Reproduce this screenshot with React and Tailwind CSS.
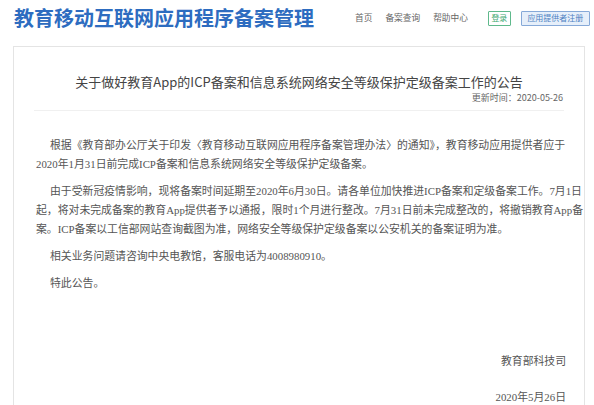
export default function App() {
  const cjk = { fontFamily: '"Noto Sans CJK SC", "Noto Sans", sans-serif' };
  const body = { fontFamily: '"Liberation Serif", "Noto Sans CJK SC", serif' };
  return (
    <div className="w-[594px] h-[405px] overflow-hidden bg-white" style={cjk}>
      <header className="flex items-center h-[36px] pl-[14px] pr-[4px] whitespace-nowrap">
        <div className="shrink-0 text-[20px] leading-[24px] font-bold text-[#2d6cc0]">
          教育移动互联网应用程序备案管理
        </div>
        <nav className="shrink-0 flex items-center ml-[41px] gap-[13px] text-[8.7px] text-[#666]">
          <span>首页</span>
          <span>备案查询</span>
          <span>帮助中心</span>
        </nav>
        <div className="shrink-0 flex items-center ml-[20px] gap-[10px]">
          <span className="h-[15px] w-[23px] flex items-center justify-center border border-[#5fb98c] text-[#3faa72] text-[8px] leading-none rounded-[1px]">
            登录
          </span>
          <span className="h-[15px] w-[69px] flex items-center justify-center border border-[#86a9d8] bg-[#e6effa] text-[#4d7fc2] text-[8px] leading-none rounded-[1px]">
            应用提供者注册
          </span>
        </div>
      </header>
      <main className="ml-[13px] mt-[10px] w-[572px] h-[400px] border border-[#e4e4e4] border-b-0">
        <div className="mx-[20px] pt-[26px] pb-[6px] border-b border-[#f0f0f0]">
          <h1 className="text-center text-[13px] leading-[18px] text-[#444] font-normal whitespace-nowrap">
            关于做好教育App的ICP备案和信息系统网络安全等级保护定级备案工作的公告
          </h1>
          <div className="text-right text-[9px] leading-[12px] text-[#666] pr-[1px] mt-[1px]">
            更新时间：2020-05-26
          </div>
        </div>
        <div className="pl-[22px] pr-[18px] pt-[25px] text-[10.85px] leading-[19px] text-[#555] whitespace-nowrap" style={body}>
          <p className="mb-[8px]">
            <span className="block pl-[14px]">根据《教育部办公厅关于印发〈教育移动互联网应用程序备案管理办法〉的通知》，教育移动应用提供者应于</span>
            <span className="block">2020年1月31日前完成ICP备案和信息系统网络安全等级保护定级备案。</span>
          </p>
          <p className="mb-[8px]">
            <span className="block pl-[14px]">由于受新冠疫情影响，现将备案时间延期至2020年6月30日。请各单位加快推进ICP备案和定级备案工作。7月1日</span>
            <span className="block">起，将对未完成备案的教育App提供者予以通报，限时1个月进行整改。7月31日前未完成整改的，将撤销教育App备</span>
            <span className="block">案。ICP备案以工信部网站查询截图为准，网络安全等级保护定级备案以公安机关的备案证明为准。</span>
          </p>
          <p className="mb-[8px] pl-[14px]">相关业务问题请咨询中央电教馆，客服电话为4008980910。</p>
          <p className="pl-[14px]">特此公告。</p>
          <p className="text-right mt-[59px]">教育部科技司</p>
          <p className="text-right mt-[17px]">2020年5月26日</p>
        </div>
      </main>
    </div>
  );
}
